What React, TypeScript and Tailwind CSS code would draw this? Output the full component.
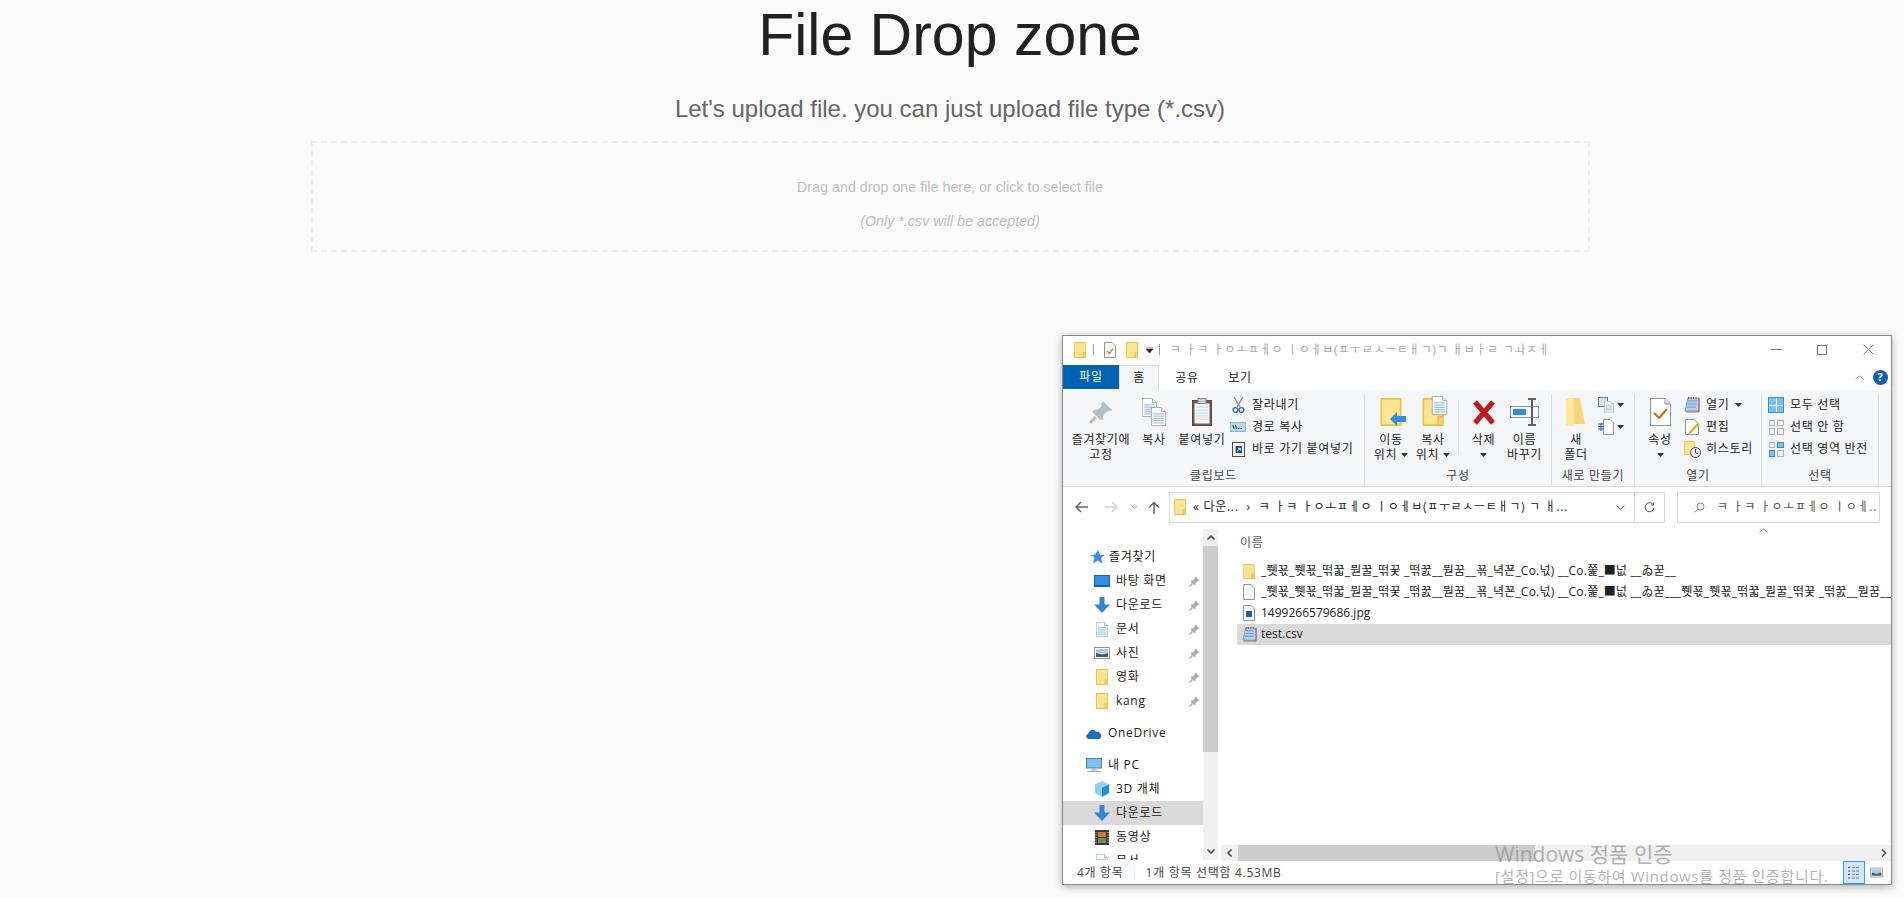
import type { ReactNode } from "react";

const jamoTitle = "ㅋ ㅏㅋ ㅏㅇㅗㅍㅔㅇ ㅣㅇㅔㅂ(ㅍㅜㄹㅅㅡㅌㅐㄱ)ㄱ ㅐㅂㅏㄹ ㄱㅘㅈㅔ";
const brokenName = "_쮓꾟_쮓꾟_떢꿃_뭗꿀_떢꿎 _떢꿄__뭗꿈__꾞_녁꾠_Co.넋) __Co.쭕_■넚 __ゐ꾿__";

const Folder = ({ w = 12, h = 16 }: { w?: number; h?: number }) => (
  <svg width={w} height={h} viewBox="0 0 12 16" className="shrink-0">
    <rect x="0.5" y="0.5" width="11" height="15" fill="#ffe491" stroke="#e8c34f" />
    <path d="M9 15.5V10.5H11.5V15.5Z" fill="#f6d36b" stroke="#e8c34f" />
  </svg>
);

const Pin = ({ color = "#b4bcc4", size = 11 }: { color?: string; size?: number }) => (
  <svg width={size} height={size} viewBox="0 0 12 12" className="shrink-0">
    <path d="M7 0.5L11.5 5L10 5.8L9 5.6L7.2 7.6L7 9.8L5.8 10L2 6.2L2.3 5L4.4 4.8L6.4 3L6.2 2Z" fill={color} />
    <path d="M3.5 8.5L0.5 11.5" stroke={color} strokeWidth="1.5" />
  </svg>
);

const DocLines = ({ w = 20, h = 25 }: { w?: number; h?: number }) => (
  <svg width={w} height={h} viewBox="0 0 20 25" className="shrink-0">
    <path d="M0.5 0.5H14L19.5 6V24.5H0.5Z" fill="#fff" stroke="#8d9499" />
    <path d="M14 0.5V6H19.5" fill="#eef0f2" stroke="#8d9499" />
    <path d="M3 9H17M3 12H17M3 15H17M3 18H17M3 21H17" stroke="#5a9bdc" />
  </svg>
);

const Notepad = ({ size = 15 }: { size?: number }) => (
  <svg width={size} height={size} viewBox="0 0 16 16" className="shrink-0">
    <path d="M4 1H15V14H1Z" fill="#b7d3ec" stroke="#6f7f8f" strokeWidth="0.8" />
    <path d="M4 4H13M3.5 7H12.5M3 10H12" stroke="#5f95c8" />
    <path d="M4.5 0V2M7 0V2M9.5 0V2M12 0V2" stroke="#555" strokeWidth="0.8" />
    <path d="M15 1V15H2" fill="none" stroke="#9c4d4d" strokeWidth="0.8" />
  </svg>
);

const DownArrow = () => (
  <svg width="16" height="16" viewBox="0 0 16 16" className="shrink-0">
    <path d="M5.5 0H10.5V7.5H16L8 16L0 7.5H5.5Z" fill="#2f86d8" />
  </svg>
);

const Picture = ({ w = 16, h = 12 }: { w?: number; h?: number }) => (
  <svg width={w} height={h} viewBox="0 0 16 12" className="shrink-0">
    <rect x="0.5" y="0.5" width="15" height="11" fill="#fff" stroke="#8d9499" />
    <rect x="2" y="2" width="12" height="4" fill="#a8cdea" />
    <path d="M2 6H14V10H2Z" fill="#4a5a66" />
    <path d="M2 6L8 7.5L14 6" fill="#dfe7ee" />
  </svg>
);

const Caret = () => (
  <svg width="7" height="4" viewBox="0 0 7 4" className="inline-block shrink-0">
    <path d="M0 0H7L3.5 4Z" fill="#333" />
  </svg>
);

const BigButton = ({ width, icon, lines, caret }: { width: number; icon: ReactNode; lines: string[]; caret?: boolean }) => (
  <div className="flex flex-col items-center shrink-0" style={{ width }}>
    <div className="h-[38px] pb-[2px] flex items-center justify-center">{icon}</div>
    {lines.map((line, i) => (
      <div key={line} className="h-[15px] leading-[15px] whitespace-nowrap flex items-center gap-1">
        {line}
        {caret && i === lines.length - 1 && <Caret />}
      </div>
    ))}
  </div>
);

const RibbonGroup = ({ width, label, children }: { width: number; label: string; children: ReactNode }) => (
  <div className="flex flex-col shrink-0 border-r border-[#dcdedf] my-[2px] h-[91px]" style={{ width }}>
    <div className="flex h-[74px]">{children}</div>
    <div className="text-center leading-[16px] text-[#444]">{label}</div>
  </div>
);

const SmallRow = ({ icon, text, caret }: { icon: ReactNode; text: string; caret?: boolean }) => (
  <div className="h-[22px] flex items-center gap-[6px] whitespace-nowrap">
    <div className="w-[16px] flex justify-center">{icon}</div>
    {text}
    {caret && <Caret />}
  </div>
);

const Ribbon = () => (
  <div className="h-[97px] bg-[#f5f6f7] border-b border-[#dadbdc] flex pl-0 pt-[2px] shrink-0">
    <RibbonGroup width={302} label="클립보드">
      <BigButton width={76} icon={<Pin size={24} />} lines={["즐겨찾기에", "고정"]} />
      <BigButton
        width={30}
        icon={
          <div className="relative w-[24px] h-[28px]">
            <div className="absolute left-0 top-0"><DocLines w={15} h={19} /></div>
            <div className="absolute right-0 bottom-0"><DocLines w={15} h={19} /></div>
          </div>
        }
        lines={["복사"]}
      />
      <BigButton
        width={66}
        icon={
          <svg width="20" height="28" viewBox="0 0 20 28">
            <rect x="0.5" y="2.5" width="19" height="25" fill="#7a5a4a" stroke="#5c4438" />
            <rect x="2.5" y="5.5" width="15" height="20" fill="#f5f8fb" />
            <path d="M4 9H16M4 12H16M4 15H16M4 18H16M4 21H16" stroke="#b8d4ec" />
            <rect x="6" y="0.5" width="8" height="5" fill="#c9ccce" stroke="#8a8a8a" />
          </svg>
        }
        lines={["붙여넣기"]}
      />
      <div className="flex flex-col -ml-[5px]">
        <SmallRow
          text="잘라내기"
          icon={
            <svg width="13" height="16" viewBox="0 0 13 16">
              <path d="M2 0L8 10M11 0L5 10" stroke="#8a8f94" strokeWidth="1.4" />
              <circle cx="3.5" cy="13" r="2.4" fill="none" stroke="#2f6fb5" strokeWidth="1.4" />
              <circle cx="9.5" cy="13" r="2.4" fill="none" stroke="#2f6fb5" strokeWidth="1.4" />
            </svg>
          }
        />
        <SmallRow
          text="경로 복사"
          icon={
            <svg width="16" height="10" viewBox="0 0 16 10">
              <rect x="0.5" y="0.5" width="15" height="9" fill="#bcd9f2" stroke="#8bb3d6" />
              <path d="M3 3L4 7M5.5 3L6.5 7M8 6.5H9.5M10.5 6.5H12" stroke="#333" />
            </svg>
          }
        />
        <SmallRow
          text="바로 가기 붙여넣기"
          icon={
            <svg width="13" height="16" viewBox="0 0 13 16">
              <rect x="0.5" y="1.5" width="12" height="14" fill="#f5f5f5" stroke="#5c4438" />
              <rect x="3.5" y="5" width="6.5" height="7" fill="#1f4f8f" />
              <path d="M5 10.5L8 7.5M6 7.3H8.3V9.6" stroke="#fff" fill="none" />
            </svg>
          }
        />
      </div>
    </RibbonGroup>
    <RibbonGroup width={187} label="구성">
      <div className="w-[4px]" />
      <BigButton
        width={44}
        caret
        icon={
          <div className="relative">
            <Folder w={22} h={28} />
            <svg width="16" height="14" viewBox="0 0 16 14" className="absolute left-[10px] top-[14px]">
              <path d="M0 7L7 0V4H16V10H7V14Z" fill="#2f8fdf" />
            </svg>
          </div>
        }
        lines={["이동", "위치"]}
      />
      <BigButton
        width={40}
        caret
        icon={
          <div className="relative">
            <Folder w={22} h={28} />
            <div className="absolute left-[9px] -top-[2px]"><DocLines w={17} h={19} /></div>
          </div>
        }
        lines={["복사", "위치"]}
      />
      <div className="w-px h-[55px] bg-[#dcdedf] mt-[6px] ml-[5px]" />
      <BigButton
        width={49}
        icon={
          <svg width="24" height="25" viewBox="0 0 24 25">
            <path d="M3 2L21 23M21 2L3 23" stroke="#c6141c" strokeWidth="5" />
          </svg>
        }
        lines={["삭제", " "]}
        caret
      />
      <BigButton
        width={33}
        icon={
          <svg width="30" height="28" viewBox="0 0 30 28">
            <rect x="0.5" y="8.5" width="28" height="11" fill="#f4f6f8" stroke="#8d9499" />
            <rect x="3" y="11" width="13" height="6" fill="#2f8fdf" />
            <path d="M18 1H26M18 27H26M22 1V27" stroke="#5c6166" strokeWidth="2" />
          </svg>
        }
        lines={["이름", "바꾸기"]}
      />
    </RibbonGroup>
    <RibbonGroup width={83} label="새로 만들기">
      <div className="w-[2px]" />
      <BigButton
        width={44}
        icon={
          <svg width="20" height="28" viewBox="0 0 20 28">
            <path d="M0 0H14L19 26H6L0 28Z" fill="#f6d77e" />
            <path d="M0 0H8V28L0 28Z" fill="#ffe79c" />
          </svg>
        }
        lines={["새", "폴더"]}
      />
      <div className="flex flex-col w-[32px]">
        <div className="h-[22px] flex items-center gap-[3px]">
          <div className="relative w-[16px] h-[16px]">
            <div className="absolute left-0 top-0 w-[10px] h-[10px] bg-[#cfe3f6] border border-[#5b7ea6]" />
            <div className="absolute right-0 bottom-0"><DocLines w={10} h={12} /></div>
          </div>
          <Caret />
        </div>
        <div className="h-[22px] flex items-center gap-[3px]">
          <svg width="16" height="16" viewBox="0 0 16 16">
            <path d="M5.5 0.5H12L15.5 4V15.5H5.5Z" fill="#fff" stroke="#8d9499" />
            <path d="M0 5H6M0 7.5H6M0 10H6M3 4V12" stroke="#1f62b0" />
          </svg>
          <Caret />
        </div>
      </div>
    </RibbonGroup>
    <RibbonGroup width={127} label="열기">
      <BigButton
        width={50}
        caret
        icon={
          <svg width="21" height="28" viewBox="0 0 21 28">
            <path d="M0.5 0.5H15L20.5 6V27.5H0.5Z" fill="#fff" stroke="#8d9499" />
            <path d="M15 0.5V6H20.5" fill="#eef0f2" stroke="#8d9499" />
            <path d="M4 15L9 20L17 11" fill="none" stroke="#c3741c" strokeWidth="2.2" />
          </svg>
        }
        lines={["속성", " "]}
      />
      <div className="flex flex-col -ml-[1px]">
        <SmallRow text="열기" caret icon={<Notepad size={16} />} />
        <SmallRow
          text="편집"
          icon={
            <svg width="14" height="16" viewBox="0 0 14 16">
              <path d="M0.5 0.5H9L13.5 5V15.5H0.5Z" fill="#fff" stroke="#8d9499" />
              <path d="M4 13L12 4L14 6L6 14L3 15Z" fill="#f0a830" />
            </svg>
          }
        />
        <SmallRow
          text="히스토리"
          icon={
            <div className="relative w-[16px] h-[16px]">
              <Folder w={11} h={14} />
              <svg width="11" height="11" viewBox="0 0 11 11" className="absolute right-[-1px] bottom-[-1px]">
                <circle cx="5.5" cy="5.5" r="5" fill="#e9ecef" stroke="#444" />
                <path d="M5.5 2V5.5L8 7" stroke="#333" fill="none" />
              </svg>
            </div>
          }
        />
      </div>
    </RibbonGroup>
    <RibbonGroup width={117} label="선택">
      <div className="flex flex-col pl-[6px]">
        <SmallRow
          text="모두 선택"
          icon={
            <div className="grid grid-cols-2 gap-px w-[16px] h-[16px] border border-[#2f8fdf] bg-white">
              <div className="bg-[#7cc0f0]" />
              <div className="bg-[#7cc0f0]" />
              <div className="bg-[#7cc0f0]" />
              <div className="bg-[#7cc0f0]" />
            </div>
          }
        />
        <SmallRow
          text="선택 안 함"
          icon={
            <div className="grid grid-cols-2 gap-[2px] w-[15px] h-[15px]">
              <div className="border border-[#b0b0b0]" />
              <div className="border border-[#b0b0b0]" />
              <div className="border border-[#b0b0b0]" />
              <div className="border border-[#b0b0b0]" />
            </div>
          }
        />
        <SmallRow
          text="선택 영역 반전"
          icon={
            <div className="grid grid-cols-2 gap-[2px] w-[15px] h-[15px]">
              <div className="border border-[#b0b0b0]" />
              <div className="border border-[#2f8fdf] bg-[#7cc0f0]" />
              <div className="border border-[#2f8fdf] bg-[#7cc0f0]" />
              <div className="border border-[#b0b0b0]" />
            </div>
          }
        />
      </div>
    </RibbonGroup>
  </div>
);

const NavRow = ({ icon, label, pin, active, indent = 31, mt = 0, gap = 6 }: { icon: ReactNode; label: string; pin?: boolean; active?: boolean; indent?: number; mt?: number; gap?: number }) => (
  <div
    className={`h-[24px] flex items-center shrink-0 whitespace-nowrap ${active ? "bg-[#d9d9d9]" : ""}`}
    style={{ paddingLeft: indent, marginTop: mt }}
  >
    <div className="w-[16px] flex justify-center">{icon}</div>
    <span style={{ marginLeft: gap }}>{label}</span>
    {pin && (
      <span className="ml-auto mr-[3px]">
        <Pin color="#a3a8ad" size={11} />
      </span>
    )}
  </div>
);

const NavPane = () => (
  <div className="w-[140px] h-[331px] overflow-hidden shrink-0 flex flex-col pt-[16px] text-[#1a1a1a]">
    <NavRow
      indent={26}
      gap={4}
      icon={
        <svg width="15" height="14" viewBox="0 0 15 14">
          <path d="M8 0L10 5H15L11 8L12.5 13.5L8 10.5L3 13.5L4.5 8L3 6L0 5.5L5 4.5Z" fill="#3a8ee0" />
        </svg>
      }
      label="즐겨찾기"
    />
    <NavRow
      pin
      label="바탕 화면"
      icon={<div className="w-[16px] h-[12px] bg-[#2e8fe5] border border-[#1a63b0] border-b-[2px]" />}
    />
    <NavRow pin label="다운로드" icon={<DownArrow />} />
    <NavRow pin label="문서" icon={<DocLines w={12} h={15} />} />
    <NavRow pin label="사진" icon={<Picture />} />
    <NavRow pin label="영화" icon={<Folder />} />
    <NavRow pin label="kang" icon={<Folder />} />
    <NavRow
      indent={23}
      mt={8}
      label="OneDrive"
      icon={
        <svg width="16" height="11" viewBox="0 0 16 11">
          <path d="M3 11C0 11 -1 7 2 6C3 2 8 0 10 4C13 3 16 6 15 9C15 10 14 11 13 11Z" fill="#1a6fc0" />
        </svg>
      }
    />
    <NavRow
      indent={23}
      mt={8}
      label="내 PC"
      icon={
        <svg width="16" height="14" viewBox="0 0 16 14">
          <rect x="0.5" y="0.5" width="15" height="9.5" fill="#7cc3f2" stroke="#5d7f9c" />
          <path d="M5 12H11M1 13.5H15" stroke="#9aa5ae" />
          <path d="M8 10V12" stroke="#9aa5ae" />
        </svg>
      }
    />
    <NavRow
      label="3D 개체"
      icon={
        <svg width="16" height="16" viewBox="0 0 16 16">
          <path d="M8 0L15 3.5V12L8 16L1 12V3.5Z" fill="#8fd0f5" />
          <path d="M8 7L15 3.5V12L8 16Z" fill="#2a8ad8" />
        </svg>
      }
    />
    <NavRow active label="다운로드" icon={<DownArrow />} />
    <NavRow
      label="동영상"
      icon={
        <svg width="14" height="15" viewBox="0 0 14 15">
          <rect width="14" height="15" fill="#3b3b3b" />
          <rect x="3" y="2" width="8" height="5" fill="#c97b3c" />
          <rect x="3" y="8" width="8" height="5" fill="#6f8f4a" />
          <path d="M1 2V13M13 2V13" stroke="#ddd" strokeDasharray="1 1.5" />
        </svg>
      }
    />
    <NavRow label="문서" icon={<DocLines w={12} h={15} />} />
  </div>
);

const VScroll = () => (
  <div className="w-[15px] h-[331px] bg-[#f0f0f0] flex flex-col shrink-0">
    <div className="h-[17px] flex items-center justify-center">
      <svg width="8" height="5" viewBox="0 0 8 5"><path d="M0.5 4.5L4 1L7.5 4.5" stroke="#444" strokeWidth="1.5" fill="none" /></svg>
    </div>
    <div className="h-[206px] bg-[#cdcdcd]" />
    <div className="mt-auto h-[17px] flex items-center justify-center">
      <svg width="8" height="5" viewBox="0 0 8 5"><path d="M0.5 0.5L4 4L7.5 0.5" stroke="#444" strokeWidth="1.5" fill="none" /></svg>
    </div>
  </div>
);

const FileRow = ({ icon, name, selected, wide }: { icon: ReactNode; name: string; selected?: boolean; wide?: boolean }) => (
  <div className={`h-[21px] flex items-center whitespace-nowrap overflow-hidden pl-[4px] ${selected ? "bg-[#d9d9d9]" : ""}`}>
    <div className="w-[16px] flex justify-center shrink-0">{icon}</div>
    <span className={`ml-[4px] ${wide ? "tracking-[0.2px]" : "tracking-normal"}`}>{name}</span>
  </div>
);

const FileList = () => (
  <div className="flex-1 min-w-0 flex flex-col pl-[3px] relative">
    <svg width="9" height="5" viewBox="0 0 9 5" className="absolute left-[541px] -top-[1px]">
      <path d="M0.5 4.5L4.5 1L8.5 4.5" stroke="#888" fill="none" />
    </svg>
    <div className="h-[32px] pl-[19px] pt-[5px] text-[#4c607a]">이름</div>
    <div className="h-[328px] min-h-0 pl-[16px] flex flex-col">
      <div>
        <FileRow wide icon={<Folder w={12} h={15} />} name={brokenName} />
        <FileRow
          wide
          icon={
            <svg width="12" height="16" viewBox="0 0 12 16">
              <path d="M0.5 0.5H8L11.5 4V15.5H0.5Z" fill="#fff" stroke="#8d9499" />
            </svg>
          }
          name={brokenName + brokenName}
        />
        <FileRow
          icon={
            <svg width="12" height="16" viewBox="0 0 12 16">
              <path d="M0.5 0.5H8L11.5 4V15.5H0.5Z" fill="#fff" stroke="#8d9499" />
              <rect x="3" y="6" width="6" height="6" fill="#1f5fb0" />
            </svg>
          }
          name="1499266579686.jpg"
        />
        <FileRow selected icon={<Notepad />} name="test.csv" />
      </div>
      <div className="mt-auto h-[16px] mb-[23px] bg-[#f0f0f0] -ml-[16px] flex items-center">
        <svg width="17" height="8" viewBox="0 0 6 8" className="shrink-0"><path d="M5 0.5L1.5 4L5 7.5" stroke="#444" strokeWidth="1.5" fill="none" /></svg>
        <div className="w-[297px] h-full bg-[#cdcdcd]" />
        <svg width="6" height="8" viewBox="0 0 6 8" className="ml-auto mr-[4px] shrink-0"><path d="M1 0.5L4.5 4L1 7.5" stroke="#444" strokeWidth="1.5" fill="none" /></svg>
      </div>
    </div>
  </div>
);

const ExplorerWindow = () => (
  <div
    className="absolute left-[1062px] top-[335px] w-[830px] h-[550px] bg-white border border-[#8a8a8a] shadow-[0_2px_8px_rgba(0,0,0,0.3)] flex flex-col overflow-hidden text-[12px] tracking-[0.7px] text-[#222]"
    style={{ fontFamily: '"Open Sans", "Noto Sans CJK KR", sans-serif' }}
  >
    <div className="h-[29px] pb-[2px] flex items-center shrink-0 pl-[11px]">
      <Folder w={12} h={16} />
      <div className="w-px h-[11px] bg-[#999] ml-[7px] mr-[10px]" />
      <svg width="12" height="16" viewBox="0 0 12 16">
        <path d="M0.5 0.5H8L11.5 4V15.5H0.5Z" fill="#fff" stroke="#8d9499" />
        <path d="M3 9L5.5 11.5L9 6.5" fill="none" stroke="#c3741c" strokeWidth="1.3" />
      </svg>
      <div className="w-[10px]" />
      <Folder w={12} h={16} />
      <svg width="7" height="6" viewBox="0 0 7 6" className="ml-[8px] mt-[1px]">
        <path d="M0 0H7M0 2H7L3.5 6Z" fill="#222" stroke="#222" strokeWidth="0.6" />
      </svg>
      <div className="w-px h-[11px] bg-[#999] ml-[6px] mr-[10px]" />
      <span className="text-[#a8a8a8] whitespace-nowrap">{jamoTitle}</span>
      <div className="ml-auto flex items-center text-[#777]">
        <div className="w-[46px] flex justify-center"><div className="w-[11px] h-px bg-[#777]" /></div>
        <div className="w-[46px] flex justify-center"><div className="w-[10px] h-[10px] border border-[#777]" /></div>
        <div className="w-[46px] flex justify-center">
          <svg width="11" height="11" viewBox="0 0 11 11"><path d="M0.5 0.5L10.5 10.5M10.5 0.5L0.5 10.5" stroke="#777" /></svg>
        </div>
      </div>
    </div>
    <div className="h-[25px] flex shrink-0 relative">
      <div className="w-[56px] h-[24px] bg-[#0063b1] text-white flex items-center justify-center">파일</div>
      <div className="w-[40px] h-[25px] bg-[#f5f6f7] border-x border-t border-[#dadbdc] -mb-px z-10 flex items-center justify-center">홈</div>
      <div className="w-[56px] flex items-center justify-center">공유</div>
      <div className="w-[50px] flex items-center justify-center">보기</div>
      <div className="ml-auto flex items-center pr-[3px] gap-[9px]">
        <svg width="9" height="5" viewBox="0 0 9 5"><path d="M0.5 4.5L4.5 0.8L8.5 4.5" stroke="#a0a0a0" fill="none" /></svg>
        <div className="w-[15px] h-[15px] rounded-full bg-[#0f5eb0] text-white text-[11px] font-bold flex items-center justify-center">?</div>
      </div>
    </div>
    <Ribbon />
    <div className="h-[42px] pb-[2px] flex items-center shrink-0">
      <svg width="14" height="12" viewBox="0 0 14 12" className="ml-[12px]">
        <path d="M13 6H1.5M6 1L1 6L6 11" stroke="#666" strokeWidth="1.5" fill="none" />
      </svg>
      <svg width="14" height="12" viewBox="0 0 14 12" className="ml-[15px]">
        <path d="M1 6H12.5M8 1L13 6L8 11" stroke="#d0d0d0" strokeWidth="1.5" fill="none" />
      </svg>
      <svg width="7" height="4" viewBox="0 0 7 4" className="ml-[13px]">
        <path d="M0.5 0.5L3.5 3.5L6.5 0.5" stroke="#999" fill="none" />
      </svg>
      <svg width="12" height="13" viewBox="0 0 12 13" className="ml-[10px]">
        <path d="M6 13V1.5M1 6.5L6 1.5L11 6.5" stroke="#666" strokeWidth="1.5" fill="none" />
      </svg>
      <div className="w-[496px] h-[31px] ml-[9px] border border-[#d9d9d9] flex items-center pl-[4px] shrink-0 overflow-hidden">
        <Folder w={12} h={16} />
        <span className="ml-[7px] whitespace-nowrap">« 다운...</span>
        <span className="ml-[8px] mr-[8px]">›</span>
        <span className="whitespace-nowrap w-[345px] overflow-hidden">ㅋ ㅏㅋ ㅏㅇㅗㅍㅔㅇ ㅣㅇㅔㅂ(ㅍㅜㄹㅅㅡㅌㅐㄱ) ㄱ ㅐ...</span>
        <svg width="9" height="5" viewBox="0 0 9 5" className="ml-auto mr-[9px] shrink-0">
          <path d="M0.5 0.5L4.5 4.5L8.5 0.5" stroke="#555" fill="none" />
        </svg>
        <div className="w-[30px] h-full border-l border-[#d9d9d9] flex items-center justify-center shrink-0">
          <svg width="11" height="11" viewBox="0 0 11 11">
            <path d="M9.5 3A4.5 4.5 0 1 0 10 6M9.5 0.5V3H7" stroke="#555" fill="none" />
          </svg>
        </div>
      </div>
      <div className="w-[203px] h-[31px] ml-[12px] border border-[#d9d9d9] flex items-center pl-[16px] shrink-0 overflow-hidden">
        <svg width="11" height="11" viewBox="0 0 11 11" className="shrink-0">
          <circle cx="6.5" cy="4.5" r="3.5" stroke="#888" fill="none" />
          <path d="M4 7L0.5 10.5" stroke="#888" />
        </svg>
        <span className="ml-[12px] text-[#555] whitespace-nowrap overflow-hidden">ㅋ ㅏㅋ ㅏㅇㅗㅍㅔㅇ ㅣㅇㅔ..</span>
      </div>
    </div>
    <div className="flex flex-1 min-h-0">
      <NavPane />
      <VScroll />
      <FileList />
    </div>
    <div className="absolute left-0 right-0 bottom-0 h-[23px] bg-white flex items-center pl-[14px] text-[#444]">
      <span>4개 항목</span>
      <div className="w-px h-[14px] bg-[#e5e5e5] ml-[10px] mr-[11px]" />
      <span>1개 항목 선택함 4.53MB</span>
      <div className="ml-auto flex items-center mr-[8px] gap-[5px]">
        <div className="w-[22px] h-[23px] bg-[#cce8ff] border border-[#3d9be0] flex items-center justify-center">
          <svg width="14" height="14" viewBox="0 0 14 14">
            <path d="M1 1.5H3M1 5H3M1 8.5H3M1 12H3" stroke="#555" />
            <path d="M5 1.5H13M5 5H13M5 8.5H13M5 12H13" stroke="#777" strokeDasharray="3 1" />
          </svg>
        </div>
        <div className="mb-[1px]"><Picture w={13} h={11} /></div>
      </div>
    </div>
    <div className="absolute left-[432px] top-[505px] text-[#8f8f8f]/70 pointer-events-none tracking-normal whitespace-nowrap">
      <div className="text-[21px] leading-[26px]">Windows 정품 인증</div>
      <div className="text-[15px] leading-[16px] mt-[1px] tracking-[0.65px]">[설정]으로 이동하여 Windows를 정품 인증합니다.</div>
    </div>
  </div>
);

export default function App() {
  return (
    <div className="relative w-full h-[898px] bg-[#fbfbfb] overflow-hidden" style={{ fontFamily: '"Liberation Sans", Arial, sans-serif' }}>
      <div className="flex flex-col items-center pt-[5px] pr-[4px]">
        <h1 className="text-[59px] leading-[60px] text-[#212121]">File Drop zone</h1>
        <p className="mt-[28px] text-2xl leading-[32px] text-[#666666]">Let's upload file. you can just upload file type (*.csv)</p>
        <div className="mt-4 w-[1279px] h-[111px] border-2 border-dashed border-[#eeeeee] flex flex-col items-center pt-[34px] text-[14.3px] text-[#bdbdbd]">
          <p className="leading-[20px]">Drag and drop one file here, or click to select file</p>
          <p className="mt-[14px] leading-[20px] italic">(Only *.csv will be accepted)</p>
        </div>
      </div>
      <ExplorerWindow />
    </div>
  );
}
